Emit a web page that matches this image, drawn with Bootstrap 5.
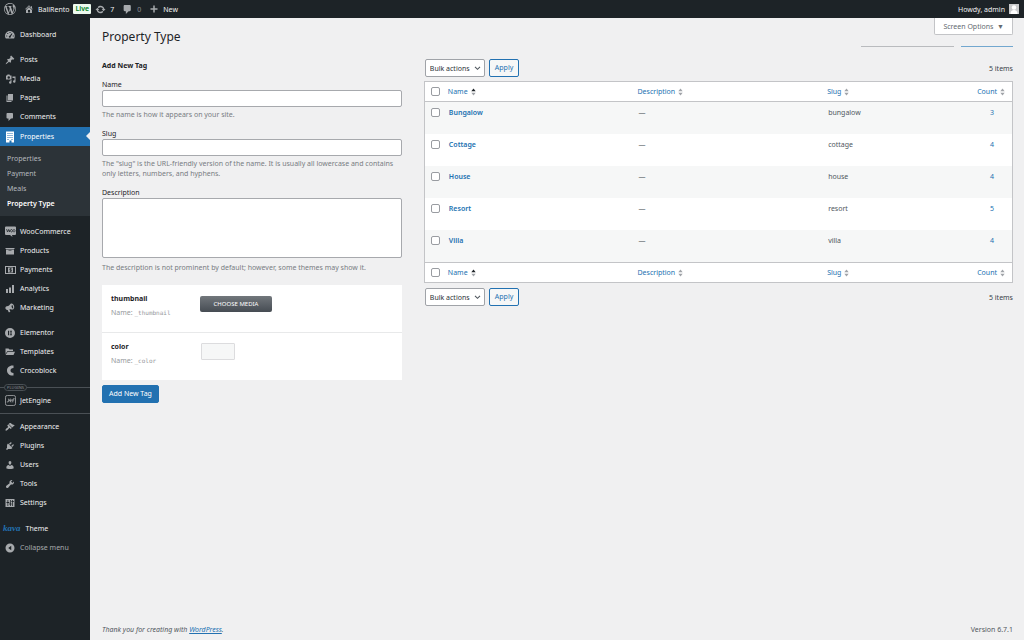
<!DOCTYPE html>
<html lang="en">
<head>
<meta charset="utf-8">
<meta name="viewport" content="width=device-width, initial-scale=1">
<title>Property Type ‹ BaliRento — WordPress</title>
<link href="https://cdn.jsdelivr.net/npm/bootstrap@5.3.0/dist/css/bootstrap.min.css" rel="stylesheet">
<style>
:root { --ink: #1d2327; --panel: #2c3338; --blue: #2271b1; --line: #c3c4c7; }
body { font: 7px/11px "Noto Sans", sans-serif; color: #3c434a; background: #f0f0f1; }
a { text-decoration: none; color: var(--blue); }
input, select, textarea, button { font: inherit; }
svg { fill: currentColor; flex: none; }

/* top bar */
.adminbar { height: 18px; background: var(--ink); padding: 0 5px 0 4px; }
.adminbar a { color: #f0f0f1; }
.adminbar svg { color: #a7aaad; }
.adminbar .muted-count { color: #8c8f94; }
.live { background: #edfaef; color: #00801e; font-weight: 600; border-radius: 1px; line-height: 10px; padding: 0 2px; }
.adminbar .avatar { width: 10px; height: 10px; background: #c9cacc; color: #fff; }

/* side menu */
.sidemenu { width: 90px; flex: none; background: var(--ink); padding-top: 7px; }
.side-link { height: 19px; padding-left: 5px; color: #f0f0f1; }
.side-link svg { color: #a7aaad; margin-right: 5px; }
.side-link svg.wide { margin-right: 4px; }
.side-link.current { background: var(--blue); color: #fff; position: relative; margin-top: 1px; }
.side-link.current svg { color: #fff; }
.side-link.current::after { content: ""; position: absolute; right: 0; top: 5px; border: 4px solid transparent; border-right-color: #f0f0f1; border-left: 0; }
.side-link.dim { color: #a7aaad; }
.subitems { background: var(--panel); padding: 5px 0; }
.subitems a { display: block; line-height: 15px; padding-left: 7px; color: #b4b9be; }
.subitems a.current { color: #fff; font-weight: 600; }
.gap-sep { height: 6px; }
.gap-sep.tall { height: 7px; }
.rule-sep { border-top: 1px solid #4a5055; margin-top: 3px; padding-top: 3px; position: relative; }
.rule-tag { position: absolute; left: 4px; top: -4px; font-size: 4px; line-height: 5px; padding: 0 2px; border: 1px solid #4a5055; border-radius: 4px; background: var(--ink); color: #8c8f94; }
.kava { font: italic 700 9px/11px "Liberation Serif", serif; color: #2271b1; margin: 0 5px 0 -2px; }

/* page body */
.page { padding: 0 11px 0 12px; min-width: 0; }
.screen-opts { border: 1px solid var(--line); border-top: 0; border-radius: 0 0 2px 2px; background: #fff; color: #646970; height: 17px; padding: 0 8px; }
.page-title { font-size: 12px; line-height: 20px; font-weight: 400; color: var(--ink); margin: 9px 0 0; }
.stubs { gap: 7px; margin-top: 11px; }
.stub { height: 1px; background: #b9bbbe; width: 93px; }
.stub-blue { background: #72a7cf; width: 52px; }
.col-form { width: 35%; padding-right: 19px; }
.col-list { width: 65%; padding-left: 3px; }
.form-head { font-size: 7px; line-height: 11px; font-weight: 700; color: var(--ink); margin: 13px 0 8px; }
.field { margin-bottom: 8px; }
.field label { display: block; color: #1d2327; }
.form-control.wp-input { border: 1px solid #a7a9ad; border-radius: 2px; padding: 0 4px; height: 17px; font-size: 7px; min-height: 0; }
.form-control.wp-area { height: 60px; resize: none; margin-bottom: 5px; }
.hint { color: #787c82; margin: 3px 0 0; line-height: 10px; }
.meta-box { margin-top: 12px; }
.meta-row { height: 47px; padding: 8px 9px; background: #fff; }
.meta-row + .meta-row { border-top: 1px solid #e8e9ea; height: 48px; }
.meta-label { width: 89px; flex: none; }
.meta-label strong { color: var(--ink); display: block; }
.meta-label span { color: #96999d; display: block; margin-top: 3px; }
.meta-label code { font: 6px/11px "DejaVu Sans Mono", monospace; color: inherit; }
.choose { background: linear-gradient(#72777c, #464c53); color: #fff; border: 0; border-radius: 2px; width: 72px; height: 16px; font-size: 6px; margin-top: 3px; padding: 0; }
.swatch { width: 34px; height: 17px; background: #f6f7f7; border: 1px solid #dcdcde; border-radius: 1px; margin: 2px 0 0 1px; padding: 0; }
.wp-btn { border-radius: 2px; height: 18px; padding: 0 5px; line-height: 16px; border: 1px solid var(--blue); background: #f6f7f7; color: var(--blue); }
.wp-btn.solid { background: var(--blue); color: #fff; padding: 0 6px; margin-top: 5px; }
.tablenav { padding-left: 1px; }
.bulk { height: 18px; width: 60px; border: 1px solid #a0a3a8; border-radius: 2px; appearance: none; padding: 0 4px; color: #2c3338; background: #fff url("data:image/svg+xml,%3Csvg xmlns='http://www.w3.org/2000/svg' viewBox='0 0 8 6'%3E%3Cpath d='M1 1l3 3 3-3' fill='none' stroke='%2350575e' stroke-width='1.3'/%3E%3C/svg%3E") no-repeat right 3px center/7px 5px; }
.tags { table-layout: fixed; width: 100%; background: #fff; border: 1px solid var(--line); border-collapse: separate; border-spacing: 0; margin: 4px 0 5px; color: #50575e; }
.tags th, .tags td { padding: 0 5px; font-weight: 400; }
.tags thead th { height: 20px; border-bottom: 1px solid var(--line); }
.tags tfoot th { height: 20px; border-top: 1px solid var(--line); }
.tags th a { display: inline-flex; align-items: center; gap: 3px; margin-left: -1px; }
.tags td { height: 32px; vertical-align: top; padding-top: 5px; }
.tags tbody tr:nth-child(odd) { background: #f6f7f7; }
.tags td a { font-weight: 600; }
.tags .c-check { width: 19px; padding: 0 0 0 6px; }
.tags td.c-check { padding-top: 6px; }
.c-main { width: 32.3%; }
.tags .c-count { width: 50px; text-align: right; }
.tags th.c-count { padding-right: 7px; }
.tags td.c-count { padding-right: 18px; }
.tags td.c-count a { font-weight: 400; }
.tags input { appearance: none; display: block; width: 9px; height: 9px; margin: 0; border: 1px solid #999ca1; border-radius: 2px; background: #fff; }
.sorted { --up: #1d2327; }
.foot { margin-top: auto; padding-bottom: 5px; color: #50575e; }
</style>
</head>
<body class="d-flex flex-column min-vh-100">
<svg class="d-none" aria-hidden="true">
  <symbol id="sort" viewBox="0 0 6 10"><path d="M3 .5L5.700 4H.3z" fill="var(--up,#a0a3a8)"/><path d="M3 9.500L.3 6h5.400z" fill="#a0a3a8"/></symbol>
</svg>
<header class="adminbar d-flex align-items-center">
  <a href="#" aria-label="WordPress" class="d-flex me-2"><svg width="12" height="12" viewBox="0 0 20 20"><path d="M20 10c0-5.51-4.49-10-10-10C4.48 0 0 4.49 0 10c0 5.52 4.48 10 10 10 5.51 0 10-4.48 10-10zM7.78 15.37L4.37 6.22c.55-.02 1.17-.08 1.17-.08.5-.06.44-1.13-.06-1.11 0 0-1.45.11-2.37.11-.18 0-.37 0-.58-.01C4.12 2.69 6.87 1.11 10 1.11c2.33 0 4.45.87 6.05 2.34-.68-.11-1.65.39-1.65 1.58 0 .74.45 1.36.9 2.1.35.61.55 1.36.55 2.46 0 1.49-1.4 5-1.4 5l-3.03-8.37c.54-.02.82-.17.82-.17.5-.05.44-1.25-.06-1.22 0 0-1.44.12-2.38.12-.87 0-2.33-.12-2.33-.12-.5-.03-.56 1.2-.06 1.22l.92.08 1.26 3.41zM17.41 10c.24-.64.74-1.87.43-4.25.7 1.29 1.05 2.71 1.05 4.25 0 3.29-1.73 6.24-4.4 7.78.97-2.59 1.94-5.2 2.92-7.78zM6.1 18.09C3.12 16.65 1.11 13.53 1.11 10c0-1.3.23-2.48.72-3.59C3.25 10.3 4.67 14.2 6.1 18.09zm4.03-6.63l2.58 6.98c-.86.29-1.76.45-2.71.45-.79 0-1.57-.11-2.29-.33.81-2.38 1.62-4.74 2.42-7.1z"/></svg></a>
  <a href="#" class="d-flex align-items-center gap-1"><svg width="10" height="10" viewBox="0 0 20 20"><path d="M16 8.5l1.53 1.53-1.06 1.06L10 4.6l-6.47 6.5-1.06-1.07L10 2.5l4 4v-2h2v4zm-6-2.46l6 5.99V18H4v-5.97zM12 17v-5H8v5h4z"/></svg>BaliRento</a>
  <span class="live ms-1 me-1">Live</span>
  <a href="#" class="d-flex align-items-center gap-1 me-2"><svg width="11" height="11" viewBox="0 0 20 20"><path d="M10.2 3.28c3.53 0 6.43 2.61 6.92 6h2.08l-3.5 4-3.5-4h2.32c-.45-1.97-2.21-3.45-4.32-3.45-1.45 0-2.73.71-3.54 1.78L4.95 5.66C6.23 4.2 8.11 3.28 10.2 3.28zm-.4 13.44c-3.52 0-6.43-2.61-6.92-6H.8l3.5-4c1.17 1.33 2.33 2.67 3.5 4H5.48c.45 1.97 2.21 3.45 4.32 3.45 1.45 0 2.73-.71 3.54-1.78l1.71 1.95c-1.28 1.46-3.15 2.38-5.25 2.38z"/></svg>7</a>
  <a href="#" class="muted-count d-flex align-items-center gap-1 me-2"><svg width="11" height="11" viewBox="0 0 20 20"><path d="M5 2h9c1.1 0 2 .9 2 2v7c0 1.1-.9 2-2 2h-2l-5 5v-5H5c-1.1 0-2-.9-2-2V4c0-1.1.9-2 2-2z"/></svg>0</a>
  <a href="#" class="d-flex align-items-center gap-1"><svg width="10" height="10" viewBox="0 0 20 20"><path d="M17 8.5v3h-5.500V17h-3v-5.500H3v-3h5.500V3h3v5.500z"/></svg>New</a>
  <a href="#" class="d-flex align-items-center gap-1 ms-auto">Howdy, admin<svg class="avatar" viewBox="0 0 20 20"><circle cx="10" cy="7" r="4.500"/><path d="M3 20c0-6 3-8 7-8s7 2 7 8z"/></svg></a>
</header>

<div class="d-flex flex-grow-1">
<nav class="sidemenu" aria-label="Main menu">
  <a href="#" class="side-link d-flex align-items-center"><svg width="10" height="10" viewBox="0 0 20 20"><path fill-rule="evenodd" d="M10 2a10 10 0 0 0-10 10c0 2 .7 3.700 1.800 5h16.400A10 10 0 0 0 10 2zm-1 2h2v2H9zM4.500 6h2v2h-2zm-2 5h2v2h-2zm13 0h2v2h-2zM13.500 6.500l1.500 1-3.500 5.500a2 2 0 1 1-2-1.500z"/></svg>Dashboard</a>
  <div class="gap-sep"></div>
  <a href="#" class="side-link d-flex align-items-center"><svg width="10" height="10" viewBox="0 0 20 20"><path d="M10.440 3.020l1.820-1.820 6.360 6.350-1.830 1.820c-1.050-.68-2.480-.57-3.410.36l-.75.750c-.92.930-1.040 2.350-.35 3.410l-1.830 1.820-2.410-2.410-2.800 2.790c-.42.420-3.380 2.710-3.800 2.290s1.860-3.390 2.280-3.810l2.790-2.790L4.100 9.360l1.830-1.820c1.050.69 2.480.57 3.400-.36l.75-.750c.93-.920 1.050-2.350.36-3.410z"/></svg>Posts</a>
  <a href="#" class="side-link d-flex align-items-center"><svg class="wide" width="11" height="10" viewBox="0 0 20 20"><path fill-rule="evenodd" d="M1 3h2l1-2h4l1 2h3v8H1zm5.500 1.500a2.500 2.500 0 1 0 0 5 2.500 2.500 0 0 0 0-5zM14 5h6v10a2.500 2.500 0 1 1-2-2.500V8h-4zM10 12h2v5a2.500 2.500 0 1 1-2-2.500z"/></svg>Media</a>
  <a href="#" class="side-link d-flex align-items-center"><svg width="10" height="10" viewBox="0 0 20 20"><path d="M6 15V2h10v13H6zm-1 1h8v2H3V5h2v11z"/></svg>Pages</a>
  <a href="#" class="side-link d-flex align-items-center"><svg width="10" height="10" viewBox="0 0 20 20"><path d="M5 2h9c1.100 0 2 .9 2 2v7c0 1.100-.9 2-2 2h-2l-5 5v-5H5c-1.100 0-2-.9-2-2V4c0-1.100.9-2 2-2z"/></svg>Comments</a>
  <a href="#" class="side-link current d-flex align-items-center"><svg width="10" height="12" viewBox="0 0 20 24"><path fill-rule="evenodd" d="M2 1h16v22h-5v-4h-4v4H2zm3 3v2h2V4zm4 0v2h2V4zm4 0v2h2V4zM5 8v2h2V8zm4 0v2h2V8zm4 0v2h2V8zm-8 4v2h2v-2zm4 0v2h2v-2zm4 0v2h2v-2zm-8 4v2h2v-2zm8 0v2h2v-2z"/></svg>Properties</a>
  <div class="subitems">
    <a href="#">Properties</a><a href="#">Payment</a><a href="#">Meals</a><a href="#" class="current">Property Type</a>
  </div>
  <div class="gap-sep"></div>
  <a href="#" class="side-link d-flex align-items-center"><svg class="wide" width="11" height="11" viewBox="0 0 22 22"><path d="M2 1h18a2 2 0 0 1 2 2v13a2 2 0 0 1-2 2h-6l1 4-5-4H2a2 2 0 0 1-2-2V3a2 2 0 0 1 2-2z"/><path d="M3 6l2 6 2-5 2 5 1-5m3 0a2 2.500 0 1 0 .1 0zm5 0a2 2.500 0 1 0 .1 0z" fill="none" stroke="#1d2327" stroke-width="1.400"/></svg>WooCommerce</a>
  <a href="#" class="side-link d-flex align-items-center"><svg width="10" height="10" viewBox="0 0 20 20"><path d="M19 4v2H1V4h18zM2 7h16v10H2V7zm11 3V9H7v1h6z"/></svg>Products</a>
  <a href="#" class="side-link d-flex align-items-center"><svg class="wide" width="11" height="10" viewBox="0 0 22 20"><path fill-rule="evenodd" d="M0 2h22v16H0zm2 2v12h18V4z"/><path d="M6 5h10v10H6z"/><path d="M13.500 7.500h-4v2.300h3.500v2.700H9M11 6v8.500" fill="none" stroke="#1d2327" stroke-width="1.300"/></svg>Payments</a>
  <a href="#" class="side-link d-flex align-items-center"><svg width="10" height="10" viewBox="0 0 20 20"><path d="M18 18V2h-4v16h4zm-6 0V7H8v11h4zm-6 0v-8H2v8h4z"/></svg>Analytics</a>
  <a href="#" class="side-link d-flex align-items-center"><svg width="10" height="10" viewBox="0 0 20 20"><path fill-rule="evenodd" d="M18.150 5.940c.46 1.620.38 3.220-.02 4.480-.42 1.280-1.260 2.180-2.300 2.480-1.400.5-3.200-.1-4.600-.3-.9-.1-1.700 0-2.400.3l1.700 3.900c.2.500-.1.900-.5 1.100l-1.700.6c-.4.200-.9 0-1.100-.5l-1.800-4.100c-2.100.4-4-.8-4.500-2.700C.4 9.100 1.500 7 3.600 6.500c2-.5 3.600-.9 5-2.100C9.800 3.200 10.700 1.500 12.300 1c2.300-.7 5 1.600 5.850 4.940zm-3.400-2c-1.500.3-2 2.200-1.500 4.200s2 3.400 3.300 3c-.1-2.500-.6-4.800-1.800-7.200z"/></svg>Marketing</a>
  <div class="gap-sep"></div>
  <a href="#" class="side-link d-flex align-items-center"><svg width="10" height="10" viewBox="0 0 20 20"><path fill-rule="evenodd" d="M10 0a10 10 0 1 0 0 20 10 10 0 0 0 0-20zM6 5.500h2v9H6zm3.500 0H14v2H9.500zm0 3.500H14v2H9.500zm0 3.500H14v2H9.500z"/></svg>Elementor</a>
  <a href="#" class="side-link d-flex align-items-center"><svg width="10" height="10" viewBox="0 0 20 20"><path d="M1 3h6l2 2h7v3H5l-4 6zM5.500 9.500H20L17 16H1z"/></svg>Templates</a>
  <a href="#" class="side-link d-flex align-items-center"><svg width="10" height="11" viewBox="0 0 20 22"><path d="M17 1v5c-4 0-6 2-6 5s2 5 6 5v5C9 22 4 17 4 11S9 0 17 1z"/></svg>Crocoblock</a>
  <div class="gap-sep tall"></div>
  <div class="rule-sep mt-0"><span class="rule-tag">PLUGINS</span>
    <a href="#" class="side-link d-flex align-items-center"><svg class="wide" width="11" height="11" viewBox="0 0 24 24"><rect x="1" y="1" width="22" height="22" rx="4" fill="none" stroke="currentColor" stroke-width="1.800"/><path d="M8 8v5q0 3-4 2M10 12h4q0-3-2-3t-2 3q0 3 4 3M21 8q-4-1-4 3v5m-1-5h4" fill="none" stroke="currentColor" stroke-width="1.800"/></svg>JetEngine</a>
  </div>
  <div class="rule-sep">
    <a href="#" class="side-link d-flex align-items-center"><svg width="10" height="10" viewBox="0 0 20 20"><path d="M14.480 11.060L7.410 3.990l1.500-1.500c.5-.56 2.300-.47 3.510.32 1.210.8 1.430 1.280 2.910 2.100 1.180.640 2.450 1.260 4.450.85zm-.71.710L6.700 4.700 4.930 6.470c-.39.390-.39 1.020 0 1.410l1.060 1.060c.390.390.390 1.030 0 1.420-.6.600-1.430 1.110-2.210 1.690-.35.260-.7.530-1.010.840C1.430 14.230.400 16.080 1.400 17.070c.990 1 2.840-.030 4.180-1.360.310-.310.580-.66.850-1.020.570-.78 1.080-1.610 1.690-2.210.390-.39 1.020-.39 1.410 0l1.060 1.060c.390.390 1.020.390 1.410 0z"/></svg>Appearance</a>
    <a href="#" class="side-link d-flex align-items-center"><svg width="10" height="10" viewBox="0 0 20 20"><path d="M13.110 4.360L9.870 7.600 8 5.730l3.240-3.240c.350-.34 1.050-.2 1.560.320.520.510.660 1.210.310 1.550zm-8 1.770l.91-1.120 9.010 9.010-1.190.840c-.71.710-2.630 1.160-3.820 1.160H6.140L4.900 17.260c-.59.590-1.540.590-2.120 0-.59-.58-.59-1.530 0-2.120l1.240-1.240v-3.880c0-1.130.4-3.190 1.090-3.890zm7.260 3.970l3.240-3.240c.340-.35 1.040-.21 1.550.310.520.510.660 1.210.310 1.550l-3.240 3.250z"/></svg>Plugins</a>
    <a href="#" class="side-link d-flex align-items-center"><svg width="10" height="10" viewBox="0 0 20 20"><path d="M10 9.250c-2.270 0-2.730-3.440-2.730-3.440C7 4.020 7.820 2 9.970 2c2.160 0 2.980 2.020 2.710 3.810 0 0-.41 3.440-2.680 3.440zm0 2.570L12.720 10c2.390 0 4.520 2.330 4.520 4.530v2.490s-3.650 1.130-7.240 1.130c-3.650 0-7.240-1.130-7.240-1.130v-2.490c0-2.250 1.940-4.480 4.470-4.480z"/></svg>Users</a>
    <a href="#" class="side-link d-flex align-items-center"><svg width="10" height="10" viewBox="0 0 20 20"><path d="M16.680 9.770c-1.340 1.340-3.300 1.670-4.950.990l-5.410 6.520c-.99.990-2.590.990-3.580 0s-.99-2.590 0-3.570l6.520-5.420c-.68-1.650-.35-3.610.99-4.950 1.280-1.280 3.120-1.620 4.720-1.060l-2.890 2.890 2.820 2.820 2.860-2.870c.530 1.580.180 3.390-1.080 4.650z"/></svg>Tools</a>
    <a href="#" class="side-link d-flex align-items-center"><svg width="10" height="10" viewBox="0 0 20 20"><path fill-rule="evenodd" d="M1 2h18v16H1zm4 2v4H3v2h2v6h1.500v-6h2V8h-2V4zm5 0v7H8.500v2H10v3h1.500v-3H13v-2h-1.500V4zm4.500 0v2H13v2h1.500v8H16V8h1.500V6H16V4z"/></svg>Settings</a>
  </div>
  <div class="gap-sep tall"></div>
  <a href="#" class="side-link d-flex align-items-center"><span class="kava">kava</span>Theme</a>
  <a href="#" class="side-link dim d-flex align-items-center"><svg width="10" height="10" viewBox="0 0 20 20"><path fill-rule="evenodd" d="M10 1a9 9 0 1 0 0 18 9 9 0 0 0 0-18zm2.500 4.500v9L6.500 10z"/></svg>Collapse menu</a>
</nav>

<main class="page flex-grow-1 d-flex flex-column">
  <div class="d-flex justify-content-between align-items-start">
    <h1 class="page-title">Property Type</h1>
    <div class="d-flex flex-column align-items-end">
      <button type="button" class="screen-opts">Screen Options &nbsp;▼</button>
      <div class="stubs d-flex"><span class="stub"></span><span class="stub stub-blue"></span></div>
    </div>
  </div>
  <div class="d-flex">
    <section class="col-form">
      <form>
        <h2 class="form-head">Add New Tag</h2>
        <div class="field"><label for="tag-name">Name</label><input id="tag-name" class="form-control wp-input" type="text"><p class="hint">The name is how it appears on your site.</p></div>
        <div class="field"><label for="tag-slug">Slug</label><input id="tag-slug" class="form-control wp-input" type="text"><p class="hint">The "slug" is the URL-friendly version of the name. It is usually all lowercase and contains only letters, numbers, and hyphens.</p></div>
        <div class="field"><label for="tag-desc">Description</label><textarea id="tag-desc" class="form-control wp-input wp-area"></textarea><p class="hint">The description is not prominent by default; however, some themes may show it.</p></div>
        <div class="meta-box">
          <div class="meta-row d-flex align-items-start"><div class="meta-label"><strong>thumbnail</strong><span>Name: <code>_thumbnail</code></span></div><button type="button" class="choose">CHOOSE MEDIA</button></div>
          <div class="meta-row d-flex align-items-start"><div class="meta-label"><strong>color</strong><span>Name: <code>_color</code></span></div><button type="button" class="swatch" aria-label="Select color"></button></div>
        </div>
        <button type="button" class="wp-btn solid">Add New Tag</button>
      </form>
    </section>
    <section class="col-list pt-2">
      <div class="tablenav d-flex align-items-center mt-1">
        <select class="bulk me-1" aria-label="Bulk actions"><option>Bulk actions</option></select>
        <button type="button" class="wp-btn">Apply</button><span class="ms-auto">5 items</span>
      </div>
      <table class="tags">
        <thead><tr><th class="c-check"><input type="checkbox" aria-label="Select all"></th>
          <th class="c-main"><a href="#" class="sorted">Name <svg width="5" height="8"><use href="#sort"/></svg></a></th><th class="c-main"><a href="#">Description <svg width="5" height="8"><use href="#sort"/></svg></a></th><th><a href="#">Slug <svg width="5" height="8"><use href="#sort"/></svg></a></th><th class="c-count"><a href="#">Count <svg width="5" height="8"><use href="#sort"/></svg></a></th></tr></thead>
        <tbody>
          <tr><td class="c-check"><input type="checkbox" aria-label="Select Bungalow"></td><td><a href="#">Bungalow</a></td><td>—</td><td>bungalow</td><td class="c-count"><a href="#">3</a></td></tr>
          <tr><td class="c-check"><input type="checkbox" aria-label="Select Cottage"></td><td><a href="#">Cottage</a></td><td>—</td><td>cottage</td><td class="c-count"><a href="#">4</a></td></tr>
          <tr><td class="c-check"><input type="checkbox" aria-label="Select House"></td><td><a href="#">House</a></td><td>—</td><td>house</td><td class="c-count"><a href="#">4</a></td></tr>
          <tr><td class="c-check"><input type="checkbox" aria-label="Select Resort"></td><td><a href="#">Resort</a></td><td>—</td><td>resort</td><td class="c-count"><a href="#">5</a></td></tr>
          <tr><td class="c-check"><input type="checkbox" aria-label="Select Villa"></td><td><a href="#">Villa</a></td><td>—</td><td>villa</td><td class="c-count"><a href="#">4</a></td></tr>
        </tbody>
        <tfoot><tr><th class="c-check"><input type="checkbox" aria-label="Select all"></th>
          <th><a href="#" class="sorted">Name <svg width="5" height="8"><use href="#sort"/></svg></a></th><th><a href="#">Description <svg width="5" height="8"><use href="#sort"/></svg></a></th><th><a href="#">Slug <svg width="5" height="8"><use href="#sort"/></svg></a></th><th class="c-count"><a href="#">Count <svg width="5" height="8"><use href="#sort"/></svg></a></th></tr></tfoot>
      </table>
      <div class="tablenav d-flex align-items-center">
        <select class="bulk me-1" aria-label="Bulk actions"><option>Bulk actions</option></select>
        <button type="button" class="wp-btn">Apply</button><span class="ms-auto">5 items</span>
      </div>
    </section>
  </div>
  <footer class="foot d-flex justify-content-between"><em>Thank you for creating with <a href="#" class="text-decoration-underline">WordPress</a>.</em><span>Version 6.7.1</span></footer>
</main>
</div>
<script src="https://cdn.jsdelivr.net/npm/bootstrap@5.3.0/dist/js/bootstrap.bundle.min.js"></script>
</body>
</html>
